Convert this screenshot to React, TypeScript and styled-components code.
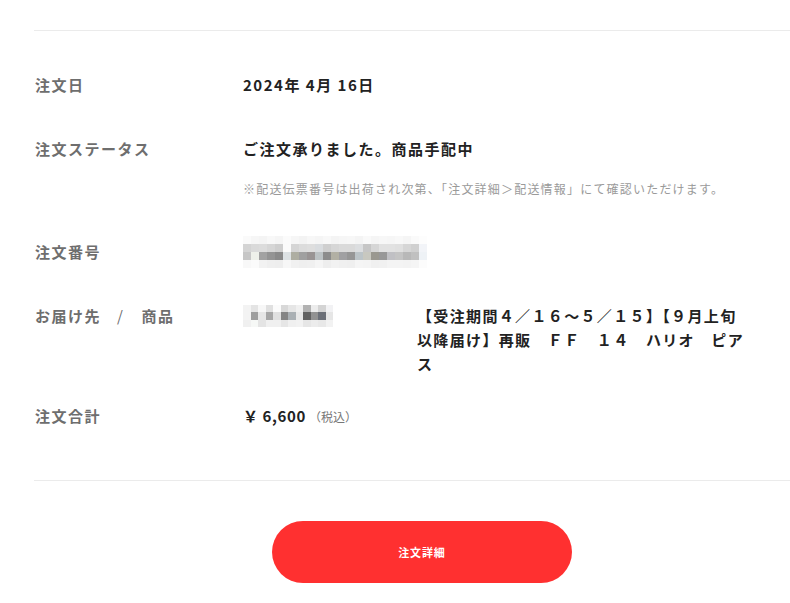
import React from "react";
import styled, { createGlobalStyle } from "styled-components";

const GlobalStyle = createGlobalStyle`
  html, body {
    margin: 0;
    padding: 0;
    background: #fff;
    overflow-x: hidden;
  }
  body {
    font-family: "Noto Sans CJK JP", "Noto Sans", sans-serif;
    color: #222;
  }
`;

const orderNumberCells = [
  ["#fafafa", "#f6f6f6", "#f4f4f4", "#f8f8f8", "#f5f5f5", "#fbfbfb", "#f6f6f6", "#f3f3f3", "#f7f7f7", "#f5f5f5", "#f8f8f8", "#f4f4f4", "#f6f6f6", "#f7f7f7", "#f4f4f4", "#f9f9f9", "#f5f5f5", "#f7f7f7", "#f6f6f6", "#f8f8f8", "#f5f5f5", "#fafafa", "#fdfdfd"],
  ["#d4d4d4", "#dadada", "#dcdcdc", "#d6d6d6", "#cfcfcf", "#fbfbfb", "#d5d5d5", "#dcdcdc", "#dedede", "#d9dcdf", "#cfcfcf", "#d6d6d6", "#dadada", "#dadada", "#dcdee0", "#c6c6c6", "#d6d6d6", "#e2e2e2", "#e2e2e2", "#e0e0e0", "#d6d6d6", "#d0d0d0", "#f2f4f8"],
  ["#c6c6c6", "#eef0ea", "#a2a2a2", "#949494", "#8a8a8a", "#dde2e4", "#aeaea2", "#a0a0a0", "#999494", "#bcc2c4", "#8c8c8c", "#b2b0a4", "#a0a0a2", "#969696", "#bcc4c8", "#c8c8c0", "#9a9890", "#989898", "#c0c0c4", "#c4c4c4", "#b8b8b8", "#c0c0c0", "#eef2f6"],
  ["#f8f8f8", "#fbfbfb", "#f2f2f2", "#efefef", "#eeeeee", "#f7f7f7", "#f1f1f1", "#efefef", "#f0f0f0", "#f5f5f5", "#eeeeee", "#f2f2f2", "#f0f0f0", "#efefef", "#f5f5f5", "#f4f4f4", "#f0f0f0", "#f1f1f1", "#f4f4f4", "#f4f4f4", "#f3f3f3", "#f5f5f5", "#fcfcfc"],
];

const recipientCells = [
  ["#f3f3f3", "#e4e4e4", "#f7f7f7", "#e0e0e0", "#fbfbfb", "#d8d8d8", "#e6e6e6", "#f0f0f0", "#b2b2b2", "#ececec", "#d4d4d4", "#f2f2f4"],
  ["#f3f3f3", "#9e9e9e", "#e6e6e6", "#a6a6a6", "#e0e0e0", "#848484", "#aab0b4", "#e8e8e8", "#626262", "#929292", "#6c7078", "#e6e6e6"],
  ["#f0f0f0", "#f6f8f6", "#e4e4e4", "#f0f0f0", "#f0f0f0", "#e6e6e6", "#f0f0f0", "#f2f2f2", "#e6e6e6", "#ececec", "#e8e8e8", "#f2f2f2"],
];

const App: React.FC = () => {
  return (
    <>
      <GlobalStyle />
      <Page>
        <Divider />
        <DetailList>
          <Row>
            <Label>注文日</Label>
            <Value>2024年 4月 16日</Value>
          </Row>
          <Row $gap={40}>
            <Label>注文ステータス</Label>
            <div>
              <Value>ご注文承りました。商品手配中</Value>
              <Note>
                ※配送伝票番号は出荷され次第、「注文詳細＞配送情報」にて確認いただけます。
              </Note>
            </div>
          </Row>
          <Row $gap={42}>
            <Label>注文番号</Label>
            <MosaicCell>
              <Mosaic rows={orderNumberCells} cell={8} />
            </MosaicCell>
          </Row>
          <Row $gap={40}>
            <Label>
              お届け先<Slash>/</Slash>商品
            </Label>
            <DeliveryGrid>
              <MosaicCell>
                <Mosaic rows={recipientCells} cell={7.5} />
              </MosaicCell>
              <ProductName>
                【受注期間４／１６～５／１５】【９月上旬以降届け】再販　ＦＦ　１４　ハリオ　ピアス
              </ProductName>
            </DeliveryGrid>
          </Row>
          <Row $gap={28}>
            <Label>注文合計</Label>
            <Value>
              <Price>￥ 6,600</Price>
              <TaxNote>（税込）</TaxNote>
            </Value>
          </Row>
        </DetailList>
        <Divider $top={51} />
        <ButtonWrap>
          <DetailButton type="button">注文詳細</DetailButton>
        </ButtonWrap>
      </Page>
    </>
  );
};

const Mosaic: React.FC<{ rows: string[][]; cell: number }> = ({ rows, cell }) => (
  <MosaicGrid>
    {rows.map((row, r) => (
      <MosaicRow key={r}>
        {row.map((c, i) => (
          <span key={i} style={{ background: c, width: cell, height: cell }} />
        ))}
      </MosaicRow>
    ))}
  </MosaicGrid>
);

const Page = styled.div`
  width: 776px;
  margin-left: 34px;
  padding-top: 30px;
  padding-bottom: 21px;
`;

const Divider = styled.hr<{ $top?: number }>`
  margin: ${({ $top }) => $top ?? 0}px 0 0;
  border: none;
  border-top: 1px solid #ebebeb;
  height: 0;
`;

const DetailList = styled.div`
  padding-top: 42px;
  display: flex;
  flex-direction: column;
`;

const Row = styled.div<{ $gap?: number }>`
  display: grid;
  grid-template-columns: 209px 1fr;
  align-items: start;
  margin-top: ${({ $gap }) => $gap ?? 0}px;
`;

const Label = styled.div`
  font-size: 15px;
  line-height: 24px;
  font-weight: 700;
  color: #6e6e6e;
  letter-spacing: 0.1em;
  padding-left: 1px;
`;

const Slash = styled.span`
  font-weight: 400;
  margin: 0 17px 0 16px;
`;

const Value = styled.div`
  font-size: 15px;
  line-height: 24px;
  font-weight: 700;
  color: #222;
  letter-spacing: 0.1em;
`;

const Price = styled.span`
  letter-spacing: 0.04em;
`;

const Note = styled.p`
  margin: 19px 0 0;
  font-size: 12px;
  line-height: 18px;
  color: #9a9a9a;
  letter-spacing: 1.2px;
`;

const TaxNote = styled.span`
  font-size: 12px;
  font-weight: 400;
  color: #777;
  letter-spacing: 0;
  margin-left: 3px;
`;

const MosaicCell = styled.div`
  height: 24px;
  display: flex;
  align-items: center;
`;

const MosaicGrid = styled.div`
  display: flex;
  flex-direction: column;
  filter: blur(0.6px);
`;

const MosaicRow = styled.div`
  display: flex;
`;

const DeliveryGrid = styled.div`
  display: grid;
  grid-template-columns: 174px 335px;
  align-items: start;
`;

const ProductName = styled.div`
  font-size: 15px;
  line-height: 24px;
  font-weight: 700;
  color: #222;
  letter-spacing: 0.09em;
`;

const ButtonWrap = styled.div`
  display: flex;
  justify-content: center;
  margin-top: 40px;
`;

const DetailButton = styled.button`
  width: 300px;
  height: 62px;
  border: none;
  border-radius: 31px;
  background: #ff3030;
  color: #fff;
  font-family: "Noto Sans CJK JP", "Noto Sans", sans-serif;
  font-size: 11px;
  font-weight: 700;
  letter-spacing: 0.08em;
  cursor: pointer;
`;

export default App;
